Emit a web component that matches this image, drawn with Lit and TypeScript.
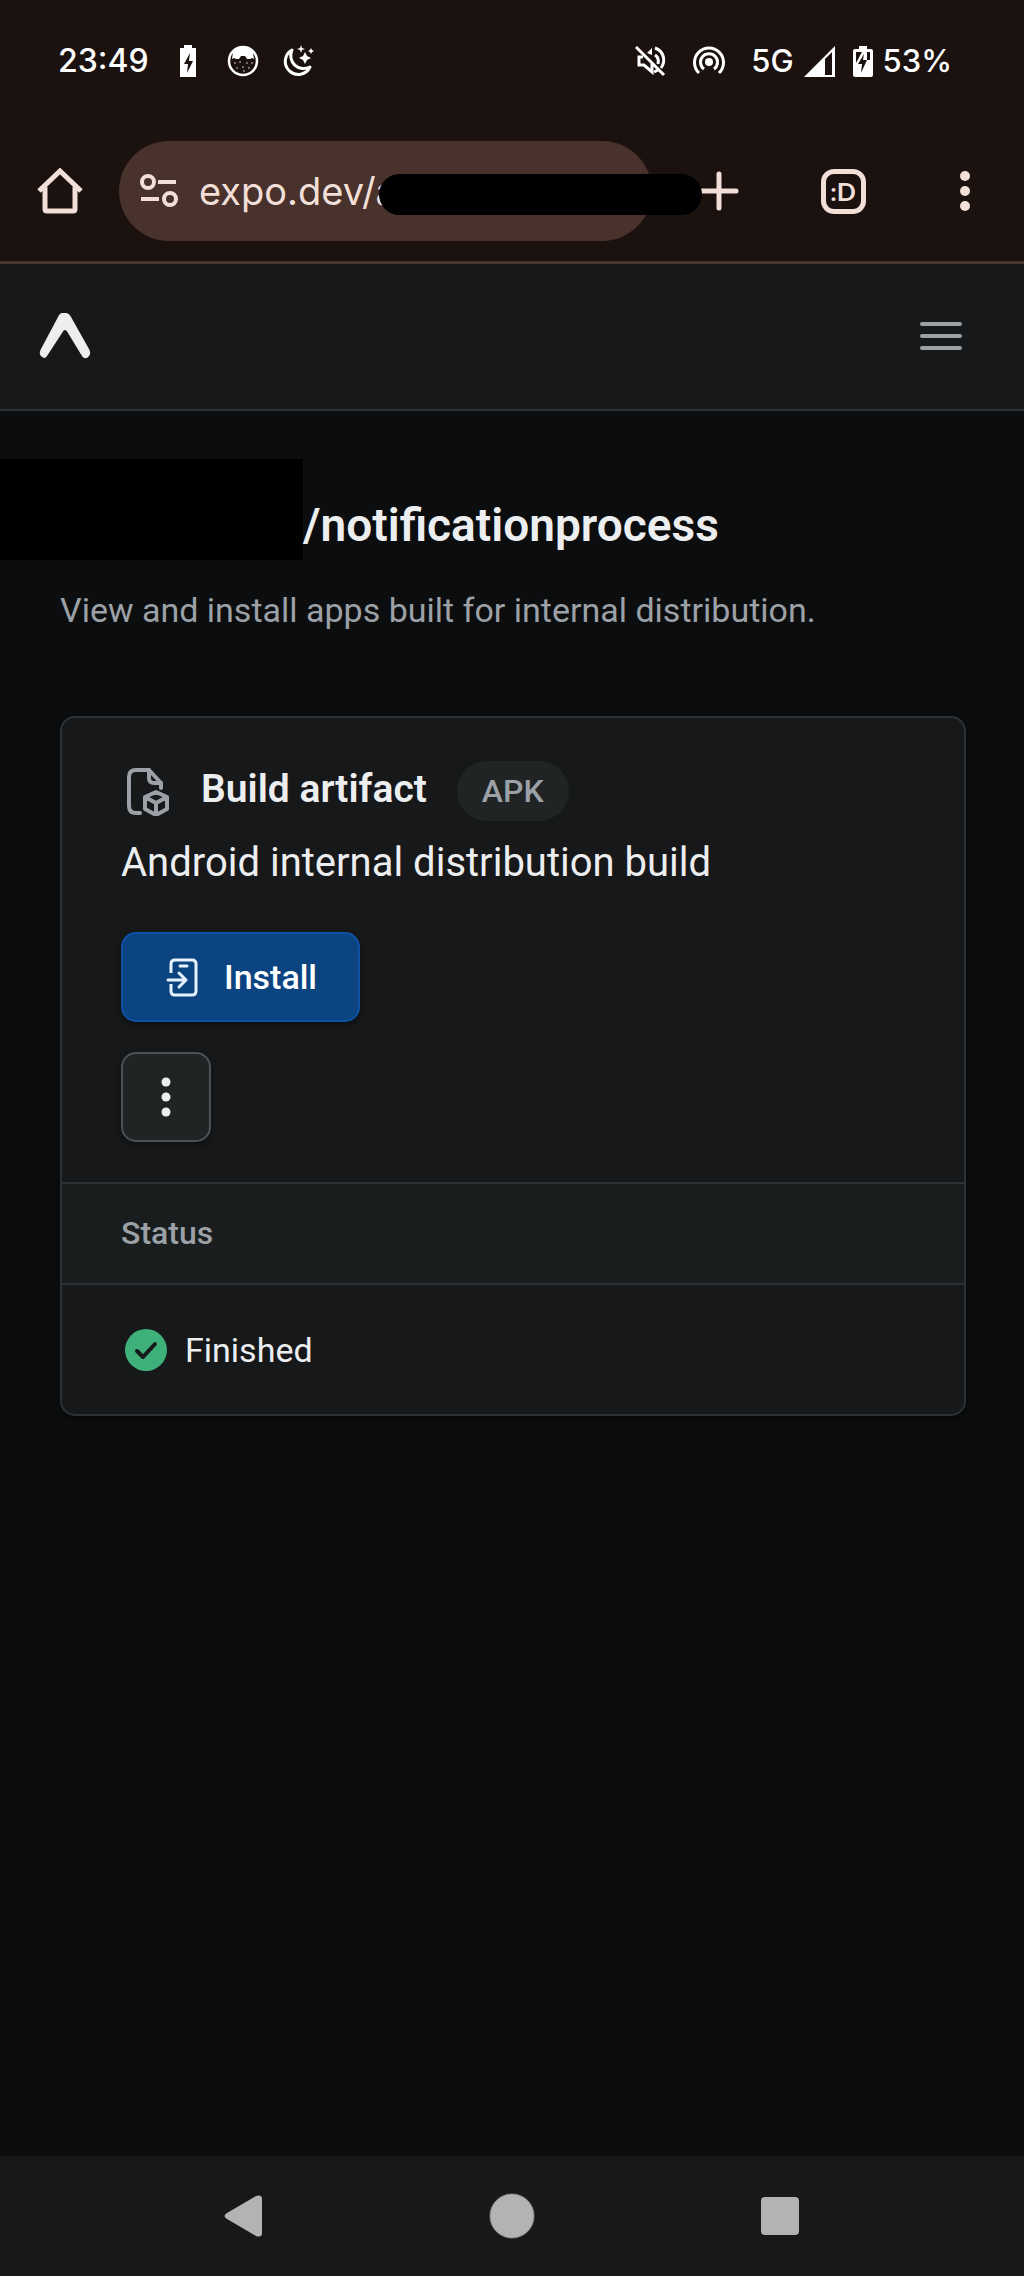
import { LitElement, html, css } from "lit";
import { customElement } from "lit/decorators.js";

@customElement("status-bar")
class StatusBar extends LitElement {
  static styles = css`
    :host {
      display: flex;
      align-items: center;
      justify-content: space-between;
      height: 122px;
      padding: 0 72px 0 58px;
      box-sizing: border-box;
      color: #fff;
      font: 500 32px/40px Inter, sans-serif;
    }
    svg {
      display: block;
      flex: none;
    }
    .group {
      display: flex;
      align-items: center;
    }
    .left {
      gap: 23px;
    }
    .charge {
      margin: 0 8px;
    }
    .right {
      gap: 26px;
    }
    .pair {
      display: flex;
      align-items: center;
      gap: 10px;
    }
    .net {
      display: flex;
      align-items: center;
      gap: 18px;
      font-size: 31px;
    }
  `;

  render() {
    return html`
      <div class="group left">
        <span>23:49</span>
        <svg class="charge" width="16" height="32" viewBox="0 0 16 32" fill="#fff">
          <path d="M4 0h8v3h4v29H0V3h4z" />
          <path d="M10 8 4 19h4l-1 9 6-12H9z" fill="#1b1210" />
        </svg>
        <svg width="32" height="32" viewBox="0 0 32 32">
          <circle cx="16" cy="16" r="14" fill="none" stroke="#fff" stroke-width="2.500" />
          <path d="M6 7C10 1 22 1 26 7l1 7-2-1-2 1h-3l-2-3h-4l-2 3H9l-2-1-2 1z" fill="#fff" />
          <g fill="#ddd">
            <circle cx="8" cy="18" r=".8" /><circle cx="13" cy="17" r=".8" />
            <circle cx="20" cy="18" r=".8" /><circle cx="25" cy="18" r=".8" />
            <circle cx="16" cy="22" r=".8" /><circle cx="10" cy="23" r=".8" />
            <circle cx="22" cy="23" r=".8" /><circle cx="17" cy="26" r=".8" />
          </g>
        </svg>
        <svg width="32" height="32" viewBox="0 0 32 32">
          <path d="M10 5A13 13 0 1 0 28 22 13 13 0 0 1 10 5z" fill="none" stroke="#fff" stroke-width="3" stroke-linejoin="round" />
          <path d="m23 7 2 4 4 2-4 2-2 4-2-4-4-2 4-2zM19 0l1 3 3 1-3 1-1 3-1-3-3-1 3-1zM29 3l1 2 2 1-2 1-1 2-1-2-2-1 2-1z" fill="#fff" />
        </svg>
      </div>
      <div class="group right">
        <svg width="32" height="32" viewBox="0 0 32 32" fill="none" stroke="#fff" stroke-width="3">
          <path d="M8 12H4v8h5l8 7v-8" />
          <path d="M12 8l5-5v7z" fill="#fff" stroke="none" />
          <path d="M20 3c9 3 11 13 6 20M20 10c3 2 4 5 3 9M19 27l4-2" />
          <path d="m1 2 28 28" />
        </svg>
        <svg width="32" height="32" viewBox="0 0 32 32" fill="none" stroke="#fff" stroke-width="3">
          <circle cx="16" cy="17" r="4" fill="#fff" stroke="none" />
          <path d="M11 24a8.500 8.500 0 1 1 10 0" />
          <path d="M6 28A14.500 14.500 0 1 1 26 28" />
        </svg>
        <div class="net">
          <div class="pair">
            <span>5G</span>
            <svg width="31" height="31" viewBox="0 0 31 31" fill="#fff">
              <path d="M0 31 31 0v31zM21 13v16h7V6z" fill-rule="evenodd" />
            </svg>
          </div>
          <div class="pair">
            <svg width="20" height="33" viewBox="0 0 20 33">
              <path d="M6 1h8v3h4q2 0 2 2v24q0 2-2 2H2q-2 0-2-2V6q0-2 2-2h4z" fill="#fff" />
              <path d="M3 7h6L3 18zM14 7h3v8h-3zM11 9 5 19h4l-1 9 6-13h-4z" fill="#1b1210" />
            </svg>
            <span>53%</span>
          </div>
        </div>
      </div>
    `;
  }
}

@customElement("browser-bar")
class BrowserBar extends LitElement {
  static styles = css`
    :host {
      display: flex;
      align-items: center;
      height: 142px;
      padding-bottom: 1px;
      box-sizing: border-box;
      border-bottom: 3px solid #4b3731;
      color: #f2dfd8;
    }
    svg {
      display: block;
    }
    button {
      display: flex;
      align-items: center;
      justify-content: center;
      width: 124px;
      height: 100px;
      padding: 0;
      border: 0;
      background: none;
      color: inherit;
    }
    .home {
      width: 119px;
    }
    .plus {
      margin-left: 5px;
    }
    .more {
      width: 119px;
    }
    .address {
      position: relative;
      display: flex;
      align-items: center;
      flex: 1;
      min-width: 0;
      height: 100px;
      padding-left: 21px;
      box-sizing: border-box;
      gap: 21px;
      border-radius: 50px;
      background: #48322b;
    }
    .address svg {
      flex: none;
    }
    .url {
      flex: 1;
      min-width: 0;
      height: 60px;
      padding: 0;
      border: 0;
      outline: 0;
      background: none;
      color: inherit;
      font: 400 38px/60px Inter, sans-serif;
    }
    .cover {
      position: absolute;
      left: 260px;
      right: -50px;
      top: 33px;
      height: 41px;
      border-radius: 21px;
      background: #000;
    }
    .tabs span {
      display: flex;
      align-items: center;
      justify-content: center;
      width: 45px;
      height: 45px;
      box-sizing: border-box;
      border: 5px solid currentColor;
      border-radius: 13px;
      font: 700 25px/30px Lato, sans-serif;
    }
  `;

  render() {
    return html`
      <button class="home" aria-label="Home">
        <svg width="46" height="46" viewBox="0 0 46 46" fill="none" stroke="currentColor" stroke-width="5">
          <path d="M2 23 23 3l21 20" />
          <path d="M8 19v22q0 2 2 2h26q2 0 2-2V19" />
        </svg>
      </button>
      <div class="address">
        <svg width="38" height="34" viewBox="0 0 38 34" fill="none" stroke="currentColor" stroke-width="4">
          <circle cx="8" cy="8" r="6" />
          <path d="M18 8h18M1 25h18" />
          <circle cx="30" cy="25" r="6" />
        </svg>
        <input class="url" aria-label="Address" value="expo.dev/a" />
        <div class="cover"></div>
      </div>
      <button class="plus" aria-label="New tab">
        <svg width="40" height="40" viewBox="0 0 40 40" stroke="currentColor" stroke-width="5" stroke-linecap="round">
          <path d="M3 20h34M20 3v34" />
        </svg>
      </button>
      <button class="tabs" aria-label="Tabs"><span>:D</span></button>
      <button class="more" aria-label="Browser menu">
        <svg width="12" height="42" viewBox="0 0 12 42" fill="currentColor">
          <circle cx="6" cy="6" r="5" /><circle cx="6" cy="21" r="5" /><circle cx="6" cy="36" r="5" />
        </svg>
      </button>
    `;
  }
}

@customElement("build-card")
class BuildCard extends LitElement {
  static styles = css`
    :host {
      display: block;
      border: 2px solid #2e3133;
      border-radius: 15px;
      overflow: hidden;
      background: #16181a;
      box-shadow: 0 3px 8px rgba(0, 0, 0, 0.4);
      color: #edeef0;
    }
    svg {
      display: block;
      flex: none;
    }
    .summary {
      display: flex;
      flex-direction: column;
      align-items: flex-start;
      padding: 43px 60px 40px 59px;
    }
    .heading {
      display: flex;
      align-items: center;
    }
    h2 {
      margin: 0 30px 4px 30px;
      font-size: 39px;
      line-height: 56px;
      font-weight: 600;
    }
    .tag {
      padding: 0 25px;
      border-radius: 30px;
      background: #202425;
      color: #9ba1a6;
      font-size: 32px;
      line-height: 60px;
      font-weight: 500;
    }
    .name {
      margin: 12px 0 39px;
      font-size: 40px;
      line-height: 60px;
    }
    button {
      display: flex;
      align-items: center;
      justify-content: center;
      height: 90px;
      box-sizing: border-box;
      border-radius: 15px;
      font: 500 34px/50px Roboto, sans-serif;
      box-shadow: 0 3px 6px rgba(0, 0, 0, 0.4);
    }
    .install {
      gap: 26px;
      padding: 0 41px 0 43px;
      border: 2px solid #0d52a4;
      background: #0b4481;
      color: #fff;
    }
    .more {
      width: 90px;
      margin-top: 30px;
      padding: 0;
      border: 2px solid #4c5155;
      background: #202425;
      color: #edeef0;
    }
    dl,
    dd {
      margin: 0;
    }
    dt {
      padding: 24px 59px 25px;
      border: solid #2e3133;
      border-width: 2px 0;
      background: #1a1d1e;
      color: #9ba1a6;
      font-size: 32px;
      line-height: 50px;
      font-weight: 500;
    }
    dd {
      display: flex;
      align-items: center;
      gap: 16px;
      padding: 40px 62px 39px 61px;
      font-size: 34px;
      line-height: 50px;
    }
  `;

  render() {
    return html`
      <div class="summary">
        <div class="heading">
          <svg width="50" height="50" viewBox="0 0 50 50" fill="none" stroke="#9ba1a6" stroke-width="4" stroke-linecap="round" stroke-linejoin="round">
            <path d="M19 47h-4q-7 0-7-7V11q0-7 7-7h13l12 13v5" />
            <path d="M28 4v8q0 5 5 5h7" />
            <path d="m35 26 11 5v12l-11 6-11-6V31zM24 31l11 6 11-6M35 37v12" />
          </svg>
          <h2>Build artifact</h2>
          <span class="tag">APK</span>
        </div>
        <div class="name">Android internal distribution build</div>
        <button class="install">
          <svg width="32" height="40" viewBox="0 0 32 40" fill="none" stroke="#e6f3ff" stroke-width="3" stroke-linecap="round" stroke-linejoin="round">
            <path d="M5 16V7q0-4 4-4h17q4 0 4 4v27q0 4-4 4H9q-4 0-4-4v-7" stroke-linecap="butt" />
            <path d="M14 9h7" />
            <path d="M2 23h18M13 16l7 7-7 7" />
          </svg>
          <span>Install</span>
        </button>
        <button class="more" aria-label="More actions">
          <svg width="10" height="40" viewBox="0 0 10 40" fill="currentColor">
            <circle cx="5" cy="5" r="4.500" /><circle cx="5" cy="20" r="4.500" /><circle cx="5" cy="35" r="4.500" />
          </svg>
        </button>
      </div>
      <dl>
        <dt>Status</dt>
        <dd>
          <svg width="46" height="46" viewBox="0 0 46 46">
            <circle cx="23" cy="23" r="21" fill="#3db179" />
            <path d="m14 24 6 6 12-13" fill="none" stroke="#16181a" stroke-width="4" stroke-linecap="round" stroke-linejoin="round" />
          </svg>
          <span>Finished</span>
        </dd>
      </dl>
    `;
  }
}

@customElement("app-root")
class AppRoot extends LitElement {
  static styles = css`
    :host {
      display: flex;
      flex-direction: column;
      min-height: 100vh;
      background: #0b0d0e;
      color: #edeef0;
      font-family: Roboto, sans-serif;
    }
    svg {
      display: block;
    }
    .chrome {
      background: #1b1210;
    }
    header {
      display: flex;
      align-items: center;
      justify-content: space-between;
      height: 147px;
      padding: 0 60px 2px 38px;
      box-sizing: border-box;
      border-bottom: 2px solid #2e3234;
      background: #16181a;
    }
    header button,
    footer button {
      padding: 0;
      border: 0;
      background: none;
      color: #9ba1a6;
    }
    main {
      flex: 1;
      padding: 48px 58px 48px 60px;
    }
    .title {
      display: flex;
      margin-left: -60px;
    }
    .cover {
      width: 303px;
      height: 101px;
      background: #000;
    }
    h1 {
      margin: 36px 0 0;
      font-size: 46px;
      line-height: 60px;
      font-weight: 600;
    }
    .intro {
      margin: 25px 0 81px;
      color: #9ba1a6;
      font-size: 34px;
      line-height: 50px;
    }
    footer {
      display: flex;
      align-items: center;
      justify-content: space-evenly;
      height: 120px;
      background: #16181a;
    }
  `;

  render() {
    return html`
      <div class="chrome">
        <status-bar></status-bar>
        <browser-bar></browser-bar>
      </div>
      <header>
        <a href="#" aria-label="Expo home">
          <svg width="54" height="48" viewBox="0 0 54 48" fill="#edeef0">
            <path d="M27 18c1 0 2 1 3 3l14 23c2 3 5 3 7 0 2-2 1-5 0-7L33 5c-2-4-4-4-7-4s-4 0-6 4L3 37c-1 2-2 5 0 7s4 3 6 0l15-23c1-2 2-3 3-3z" />
          </svg>
        </a>
        <button aria-label="Open menu">
          <svg width="46" height="34" viewBox="0 0 46 34" stroke="currentColor" stroke-width="4" stroke-linecap="round">
            <path d="M4 5h38M4 17h38M4 29h38" />
          </svg>
        </button>
      </header>
      <main>
        <div class="title">
          <div class="cover"></div>
          <h1>/notificationprocess</h1>
        </div>
        <p class="intro">View and install apps built for internal distribution.</p>
        <build-card></build-card>
      </main>
      <footer>
        <button aria-label="Back">
          <svg width="46" height="46" viewBox="0 0 46 46" fill="#b3b3b3">
            <path d="M5 20 34 3q6-2 6 3v34q0 5-6 3L5 26q-5-3 0-6z" />
          </svg>
        </button>
        <button aria-label="Home screen">
          <svg width="46" height="46" viewBox="0 0 46 46">
            <circle cx="23" cy="23" r="22" fill="#b3b3b3" stroke="#8f8f8f" stroke-width="1" />
          </svg>
        </button>
        <button aria-label="Recent apps">
          <svg width="46" height="46" viewBox="0 0 46 46" fill="#b3b3b3">
            <rect x="4" y="4" width="38" height="38" rx="4" />
          </svg>
        </button>
      </footer>
    `;
  }
}
